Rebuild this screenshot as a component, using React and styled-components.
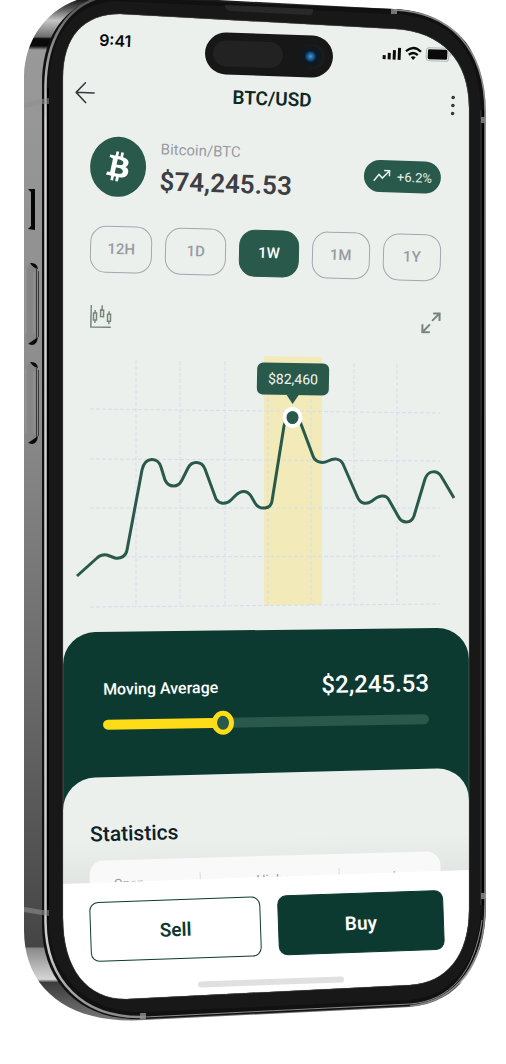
import React, { useState } from 'react';
import styled, { createGlobalStyle } from 'styled-components';

const GlobalStyle = createGlobalStyle`
  *, *::before, *::after { box-sizing: border-box; }
  body { margin: 0; background: #ffffff; font-family: Roboto, "Liberation Sans", sans-serif; }
  button { font: inherit; cursor: pointer; }
`;

const colors = {
  screen: '#ecf0ed',
  deep: '#0d3a30',
  green: '#29594a',
  muted: '#989ba3',
  yellow: '#ffdc18',
};

const Phone = styled.main`
  position: relative;
  width: 100%;
  max-width: 560px;
  display: grid;
  grid-template-columns: 63fr 406fr 37fr;
  padding: 14px 0 64px;
`;

const Shell = styled.svg`
  position: absolute;
  inset: 0;
  width: 100%;
  height: 100%;
  z-index: 3;
  pointer-events: none;
`;

const Screen = styled.div`
  grid-column: 2;
  position: relative;
  overflow: hidden;
  background: ${colors.screen};
  border-radius: 48px 72px 72px 48px;
  padding-top: 9px;
`;

const Row = styled.div`
  display: flex;
  align-items: center;
  justify-content: space-between;
  transform: rotate(${(p) => p.$tilt}deg);
`;

const StatusBar = styled(Row)`
  height: 48px;
  padding: 0 18px 0 36px;
  color: #0a0a0a;
  font-family: Inter, sans-serif;
  font-size: 16px;
  font-weight: 600;
`;

const StatusIcons = styled.svg`
  width: 70px;
  height: 18px;
`;

const Island = styled.div`
  position: absolute;
  top: 20px;
  left: 35%;
  width: 128px;
  height: 42px;
  padding: 8px;
  border-radius: 21px;
  background: #171717;
  transform: rotate(2deg);
  display: flex;
  align-items: center;
  justify-content: space-between;
`;

const Sensor = styled.span`
  width: 70px;
  height: 26px;
  border-radius: 13px;
  background: #222223;
`;

const Lens = styled.span`
  width: 24px;
  height: 24px;
  border-radius: 50%;
  background: radial-gradient(circle at 40% 50%, #4a9ad6 0, #1b5f97 3px, #0b1a28 6px, #15181b 10px, #1c1c1d 12px);
`;

const NavBar = styled(Row)`
  height: 40px;
  margin-top: 8px;
  padding: 0 12px;
  color: #35393d;
`;

const IconButton = styled.button`
  display: flex;
  padding: 0;
  border: 0;
  background: none;
  color: inherit;
`;

const Title = styled.h1`
  margin: 0;
  font-size: 19px;
  line-height: 24px;
  font-weight: 600;
  color: #0b2a22;
`;

const AssetRow = styled(Row)`
  height: 62px;
  margin-top: 22px;
  padding: 0 28px 0 27px;
`;

const Asset = styled.div`
  display: flex;
  align-items: center;
  gap: 14px;
`;

const Coin = styled.div`
  display: flex;
  align-items: center;
  justify-content: center;
  width: 56px;
  height: 60px;
  border-radius: 50%;
  background: ${colors.green};
`;

const AssetName = styled.div`
  font-size: 15px;
  line-height: 20px;
  color: ${colors.muted};
`;

const Price = styled.div`
  margin-top: 6px;
  font-size: 26px;
  line-height: 32px;
  font-weight: 600;
  color: #3d3e43;
`;

const Change = styled.div`
  display: flex;
  align-items: center;
  justify-content: center;
  gap: 6px;
  width: 77px;
  height: 32px;
  border-radius: 16px;
  background: ${colors.green};
  color: #e6f0ea;
  font-size: 13px;
`;

const Periods = styled(Row)`
  display: grid;
  grid-template-columns: 62fr 61fr 59fr 58fr 58fr;
  height: 48px;
  margin-top: 26px;
  padding: 0 28px 0 27px;
  gap: 13px;
`;

const Period = styled.button`
  height: 47px;
  padding: 0;
  border: 1px solid ${(p) => (p.$active ? colors.green : '#a3a6ae')};
  border-radius: 16px;
  background: ${(p) => (p.$active ? colors.green : 'transparent')};
  color: ${(p) => (p.$active ? '#ffffff' : colors.muted)};
  font-size: 15px;
  line-height: 24px;
  font-weight: 500;
`;

const Tools = styled(Row)`
  height: 24px;
  margin-top: 31px;
  padding: 0 28px 0 27px;
  color: #76877a;
`;

const ChartBox = styled.div`
  position: relative;
  height: 260px;
  margin-top: 20px;
`;

const ChartSvg = styled.svg`
  display: block;
  width: 100%;
  height: 100%;
`;

const Tooltip = styled.div`
  position: absolute;
  top: 11px;
  left: 57%;
  width: 72px;
  height: 32px;
  margin-left: -37px;
  border-radius: 6px;
  background: ${colors.green};
  color: #f1f6f3;
  font-size: 14px;
  line-height: 32px;
  text-align: center;
  transform: rotate(1deg);

  &::after {
    content: '';
    position: absolute;
    top: 100%;
    left: 50%;
    margin-left: -6px;
    border: 6px solid transparent;
    border-top: 9px solid ${colors.green};
    border-bottom: 0;
  }
`;

const Average = styled.section`
  position: relative;
  margin-top: 18px;
  padding: 40px 40px 39px;
  color: #ffffff;

  &::before {
    content: '';
    position: absolute;
    inset: 0 0 -60px;
    background: ${colors.deep};
    border-radius: 32px 32px 0 0;
    transform: skewY(-0.7deg);
  }
`;

const AverageHead = styled(Row)`
  height: 32px;
`;

const AverageLabel = styled.label`
  font-size: 16px;
  font-weight: 500;
`;

const AverageValue = styled.output`
  font-size: 24px;
  font-weight: 500;
`;

const Slider = styled.input`
  position: relative;
  display: block;
  width: 100%;
  height: 24px;
  margin: 8px 0 0;
  appearance: none;
  background: none;
  transform: rotate(-1deg);

  &::-webkit-slider-runnable-track {
    height: 10px;
    border-radius: 5px;
    background: linear-gradient(
      to right,
      ${colors.yellow} ${(p) => p.value}%,
      ${colors.green} ${(p) => p.value}%
    );
  }

  &::-webkit-slider-thumb {
    appearance: none;
    width: 22px;
    height: 24px;
    margin-top: -7px;
    border: 5px solid ${colors.yellow};
    border-radius: 50%;
    background: ${colors.green};
  }
`;

const Statistics = styled.section`
  position: relative;
  padding: 43px 28px 0 27px;

  &::before {
    content: '';
    position: absolute;
    inset: 0;
    background: linear-gradient(${colors.screen} 45%, #dbe0dd 90%);
    border-radius: 32px 32px 0 0;
    transform: skewY(-1.5deg);
  }
`;

const Heading = styled(Row)`
  height: 28px;

  h2 {
    margin: 0;
    font-size: 21px;
    font-weight: 500;
    color: #0c2029;
  }
`;

const Stats = styled.dl`
  position: relative;
  display: grid;
  grid-template-columns: 110px 1fr 102px;
  height: 60px;
  margin: 12px 0 0;
  padding-top: 14px;
  border-radius: 14px;
  background: #f9f9f9;
  transform: rotate(-1.6deg);
`;

const Stat = styled.div`
  text-align: ${(p) => p.$align};
  padding: ${(p) => p.$pad};
  border-left: ${(p) => (p.$divided ? '1px solid #dcdcdf' : '0')};

  dt {
    font-size: 13px;
    line-height: 20px;
    color: ${colors.muted};
  }
`;

const Footer = styled.footer`
  position: relative;
  margin-top: -39px;
  padding: 19px 25px 14px 27px;

  &::before {
    content: '';
    position: absolute;
    inset: 0 0 -20px;
    background: #ffffff;
    transform: skewY(-2deg);
  }
`;

const Actions = styled(Row)`
  gap: 17px;
`;

const Action = styled.button`
  flex: ${(p) => (p.$filled ? 166 : 171)} 1 0;
  height: 60px;
  padding: 0;
  border: 1px solid ${colors.deep};
  border-radius: 9px;
  background: ${(p) => (p.$filled ? colors.deep : '#ffffff')};
  color: ${(p) => (p.$filled ? '#ffffff' : colors.deep)};
  font-size: 19px;
  font-weight: 600;
`;

const HomeBar = styled.div`
  position: relative;
  width: 146px;
  height: 6px;
  margin: 23px auto 1px;
  left: 1%;
  border-radius: 3px;
  background: #e0e0e0;
  transform: rotate(-2deg);
`;

const HOLE =
  'M63 78 C63 36 84 14 120 14 L395 29 C442 32 469 60 469 108 L469 910 C469 956 446 983 410 985 L127 999 C88 1000 63 970 63 918 Z';

function PhoneShell() {
  return (
    <Shell viewBox="0 0 506 1064" preserveAspectRatio="none" aria-hidden="true">
      <defs>
        <linearGradient id="metal" gradientUnits="userSpaceOnUse" x1="40" y1="0" x2="34" y2="1020">
          <stop offset="0" stopColor="#1c1c1c" />
          <stop offset="0.008" stopColor="#555" />
          <stop offset="0.02" stopColor="#c6c6c6" />
          <stop offset="0.036" stopColor="#6d6d6d" />
          <stop offset="0.038" stopColor="#0a0a0a" />
          <stop offset="0.045" stopColor="#0a0a0a" />
          <stop offset="0.049" stopColor="#999" />
          <stop offset="0.4" stopColor="#8c8c8c" />
          <stop offset="0.7" stopColor="#666" />
          <stop offset="0.928" stopColor="#454545" />
          <stop offset="0.93" stopColor="#8a8a8a" />
          <stop offset="0.96" stopColor="#d6d6d6" />
          <stop offset="0.963" stopColor="#3c3c3c" />
          <stop offset="1" stopColor="#777" />
        </linearGradient>
        <linearGradient id="rim" gradientUnits="userSpaceOnUse" x1="0" y1="0" x2="0" y2="1020">
          <stop offset="0" stopColor="#555" />
          <stop offset="0.08" stopColor="#b5b5b5" />
          <stop offset="0.12" stopColor="#d5d2d3" />
          <stop offset="0.93" stopColor="#cccccc" />
          <stop offset="1" stopColor="#8a8a8a" />
        </linearGradient>
      </defs>
      <path
        fill="url(#metal)"
        fillRule="evenodd"
        d={`M24 76 C25 38 48 6 87 -3 L140 -4 L394 9 C450 11 486 46 486 112 L486 905 C486 965 458 1003 410 1007 L145 1020 C70 1025 24 990 24 930 Z ${HOLE}`}
      />
      <path
        fill="#111111"
        fillRule="evenodd"
        d={`M42 84 C42 36 65 4 104 -3 L394 9 C450 12 485 48 485 112 L485 905 C484 962 458 1001 410 1006 L145 1019 C82 1022 42 984 42 925 Z ${HOLE}`}
      />
      <path
        fill="none"
        stroke="url(#rim)"
        strokeWidth="2.500"
        d="M98 -2 C66 8 46 40 45.500 86 L45.500 922 C46 981 83 1019 145 1017"
      />
      <path fill="none" stroke="#8a8a8a" strokeWidth="1" d="M145 1017 L410 1004 C450 1001 475 972 482 920" />
      <path
        fill="none"
        stroke="#8a8a8a"
        strokeWidth="1.500"
        d="M394 10 C450 12 485 48 485 112 L485 905 C485 962 458 1001 410 1006"
      />
      <path
        fill="#181818"
        fillRule="evenodd"
        d={`M49 88 C49 36 72 6 113 1 L394 14 C450 16 481 52 481 112 L481 905 C481 960 452 997 410 1000 L145 1012 C88 1014 49 976 49 920 Z ${HOLE}`}
      />
      <path fill="none" stroke="#000000" strokeWidth="2" d="M48 88 V920 M483 110 V905" />
      <path fill="none" stroke="#3c3c3c" d="M481 110 V905" />
      <path fill="none" stroke="#8f9390" d={HOLE} strokeWidth="1" opacity="0.35" />
      <path fill="#292929" d="M225 5 L313 9 V12 Q313 15 309 15 L231 11 Q225 10 225 5 Z" />
      <g fill="#8f8f8f">
        <path d="M24 103 L42 99 L49 98 V104 L42 104 L24 108 Z M24 907 L42 910 L49 910 V916 L42 915 L24 912 Z" opacity="0.6" />
        <path d="M391 9 h6 v5 h-6 Z M140 1013 h6 v6 h-6 Z M481 117 h5 v6 h-5 Z M481 893 h5 v6 h-5 Z" opacity="0.8" />
      </g>
      <path fill="#050505" d="M28 189 H35 V230 L28 229 L31 226 V192 Z" />
      {[262, 361].map((y) => (
        <g key={y} transform={`translate(0 ${y})`}>
          <path fill="#868686" d="M26 8 Q29 -1 35 2 Q39 6 39 14 V70 Q38 80 31 83 Q26 82 26 74 Z" />
          <path fill="#0b0b0b" d="M30 1 Q37 0 38 7 Q33 6 30 1 Z M28 82 L38 75 Q37 83 32 83 Z" />
          <path fill="none" stroke="#3a3a3a" d="M36.500 7 V76 M38.500 9 V75" />
          <path fill="none" stroke="#aaaaaa" d="M34 10 V72 M26 8 V72" opacity="0.5" />
        </g>
      ))}
    </Shell>
  );
}

function PriceChart() {
  return (
    <ChartBox>
      <ChartSvg viewBox="0 0 406 260" preserveAspectRatio="none" role="img" aria-label="BTC/USD price over one week">
        <path fill="#f2ebb9" d="M201 4 L259 5 V253 H201 Z" />
        <path
          fill="none"
          stroke="#d8dcec"
          strokeDasharray="4 2"
          d="M73 8 V255 M117 9 V254 M162 9 V254 M205 10 V254 M248 11 V253 M291 11 V253 M334 12 V253
             M27 57 L377 61 M27 107 L377 109 M27 156 L377 156 M27 205 L377 204 M27 255 L377 252"
        />
        <path
          fill="none"
          stroke={colors.green}
          strokeWidth="3"
          strokeLinejoin="round"
          d="M14 224 L34 206 Q38 202 44 203 L52 206 C58 207 63 204 64 198 L79 118
             C82 104 95 105 98 115 L102 128 C106 136 115 136 119 128 L125 116 C129 108 139 109 142 117
             L153 147 C156 152 163 153 168 148 L172 144 C178 138 184 138 188 144 L192 151
             C197 159 208 157 209 149 L221 74 C224 58 234 59 238 72 L250 104 C252 110 259 112 265 109
             C271 106 277 106 280 112 L294 144 C297 152 303 153 309 149 C316 143 323 142 326 148
             L335 164 C339 172 348 172 351 164 L362 127 C365 118 374 118 378 124 L391 146"
        />
        <ellipse cx="229.500" cy="65.500" rx="8" ry="8.500" fill={colors.green} stroke="#ffffff" strokeWidth="4" />
      </ChartSvg>
      <Tooltip>$82,460</Tooltip>
    </ChartBox>
  );
}

const PERIODS = ['12H', '1D', '1W', '1M', '1Y'];

export default function App() {
  const [period, setPeriod] = useState('1W');
  const [average, setAverage] = useState(36);

  return (
    <>
      <GlobalStyle />
      <Phone>
        <PhoneShell />
        <Screen>
          <StatusBar $tilt={2.5}>
            <span>9:41</span>
            <StatusIcons viewBox="0 0 70 18" aria-hidden="true">
              <path d="M2 12h3v4H2z M7 9.500h3v6.500H7z M12 6.500h3v9.500h-3z M17 4h3v12h-3z" fill="#0a0a0a" />
              <g fill="none" stroke="#0a0a0a" strokeWidth="2.300">
                <path d="M25 7 Q32.500 0 40 7" />
                <path d="M28 10.500 Q32.500 6.500 37 10.500" />
              </g>
              <path d="M30 12.800 Q32.500 10.800 35 12.800 L32.500 15.600 Z" fill="#0a0a0a" />
              <rect x="45.500" y="2.500" width="22.500" height="13" rx="3" fill="none" stroke="#b4b7b5" />
              <rect x="47" y="4" width="19.500" height="10" rx="1.500" fill="#0a0a0a" />
              <path d="M69 7 Q71 9 69 11 Z" fill="#a7aaa8" />
            </StatusIcons>
          </StatusBar>
          <Island>
            <Sensor />
            <Lens />
          </Island>

          <NavBar $tilt={2}>
            <IconButton aria-label="Back">
              <svg width="20" height="22" viewBox="0 0 20 22" fill="none" stroke="currentColor" strokeWidth="1.500" strokeLinecap="round" strokeLinejoin="round">
                <path d="M10 1 L1 11 L11 21 M1 11 H19" />
              </svg>
            </IconButton>
            <Title>BTC/USD</Title>
            <IconButton aria-label="More options">
              <svg width="8" height="22" viewBox="0 0 8 22" fill="currentColor">
                <circle cx="4" cy="3" r="1.800" />
                <circle cx="4" cy="11" r="1.800" />
                <circle cx="4" cy="19" r="1.800" />
              </svg>
            </IconButton>
          </NavBar>

          <AssetRow $tilt={2}>
            <Asset>
              <Coin>
                <svg width="48" height="48" viewBox="0 0 24 24" fill="#ffffff" aria-hidden="true">
                  <path transform="rotate(-4 12 12)" d="M17.288 10.291c.24-1.59-.974-2.45-2.64-3.03l.54-2.153-1.315-.33-.525 2.107c-.345-.087-.705-.167-1.064-.25l.526-2.127-1.32-.33-.54 2.165c-.285-.067-.565-.132-.84-.2l-1.815-.45-.35 1.407s.975.225.955.236c.535.136.63.486.615.766l-1.477 5.92c-.075.166-.24.406-.614.314.015.02-.96-.24-.96-.24l-.66 1.51 1.71.426.93.242-.54 2.19 1.32.327.54-2.17c.36.1.705.19 1.05.273l-.51 2.154 1.32.33.545-2.19c2.24.427 3.93.257 4.64-1.774.57-1.637-.03-2.58-1.217-3.196.854-.193 1.5-.76 1.68-1.93h.01zm-3.01 4.22c-.404 1.64-3.157.75-4.05.53l.72-2.9c.896.23 3.757.67 3.33 2.37zm.41-4.24c-.37 1.49-2.662.735-3.405.55l.654-2.64c.744.18 3.137.524 2.75 2.084v.006z" />
                </svg>
              </Coin>
              <div>
                <AssetName>Bitcoin/BTC</AssetName>
                <Price>$74,245.53</Price>
              </div>
            </Asset>
            <Change>
              <svg width="18" height="14" viewBox="0 0 18 14" fill="none" stroke="currentColor" strokeWidth="1.500" aria-hidden="true">
                <path d="M1 12 L6 5.500 L9.500 9 L16.500 1.500 M11 1.500 H16.500 V7" />
              </svg>
              +6.2%
            </Change>
          </AssetRow>

          <Periods $tilt={1.5}>
            {PERIODS.map((p) => (
              <Period key={p} $active={p === period} aria-pressed={p === period} onClick={() => setPeriod(p)}>
                {p}
              </Period>
            ))}
          </Periods>

          <Tools $tilt={1}>
            <IconButton aria-label="Candlestick view">
              <svg width="22" height="24" viewBox="0 0 22 24" fill="none" stroke="currentColor" strokeWidth="1.500">
                <path d="M1 0 V22 H21 M5 5 V8 M5 15 V18 M3.500 8 h3 v7 h-3 Z M12 0 V5 M10.500 5 h3 v6.500 h-3 Z M19 6 V9 M19 16 V19 M17.500 9 h3 v7 h-3 Z" />
              </svg>
            </IconButton>
            <IconButton aria-label="Expand chart">
              <svg width="20" height="22" viewBox="0 0 20 22" fill="none" stroke="currentColor" strokeWidth="2">
                <path d="M11 9 L18 2 M12 1.500 H18.500 V9 M9 12.500 L2 20 M1.500 12.500 V20.500 H9" />
              </svg>
            </IconButton>
          </Tools>

          <PriceChart />

          <Average>
            <AverageHead $tilt={-1}>
              <AverageLabel htmlFor="moving-average">Moving Average</AverageLabel>
              <AverageValue htmlFor="moving-average">$2,245.53</AverageValue>
            </AverageHead>
            <Slider
              id="moving-average"
              type="range"
              min="0"
              max="100"
              value={average}
              onChange={(e) => setAverage(Number(e.target.value))}
            />
          </Average>

          <Statistics>
            <Heading $tilt={-1.5}>
              <h2>Statistics</h2>
            </Heading>
            <Stats>
              <Stat $align="left" $pad="0 0 0 24px">
                <dt>Open</dt>
              </Stat>
              <Stat $align="center" $pad="0" $divided>
                <dt>High</dt>
              </Stat>
              <Stat $align="right" $pad="0 24px 0 0" $divided>
                <dt>Low</dt>
              </Stat>
            </Stats>
          </Statistics>

          <Footer>
            <Actions $tilt={-2}>
              <Action>Sell</Action>
              <Action $filled>Buy</Action>
            </Actions>
            <HomeBar />
          </Footer>
        </Screen>
      </Phone>
    </>
  );
}
